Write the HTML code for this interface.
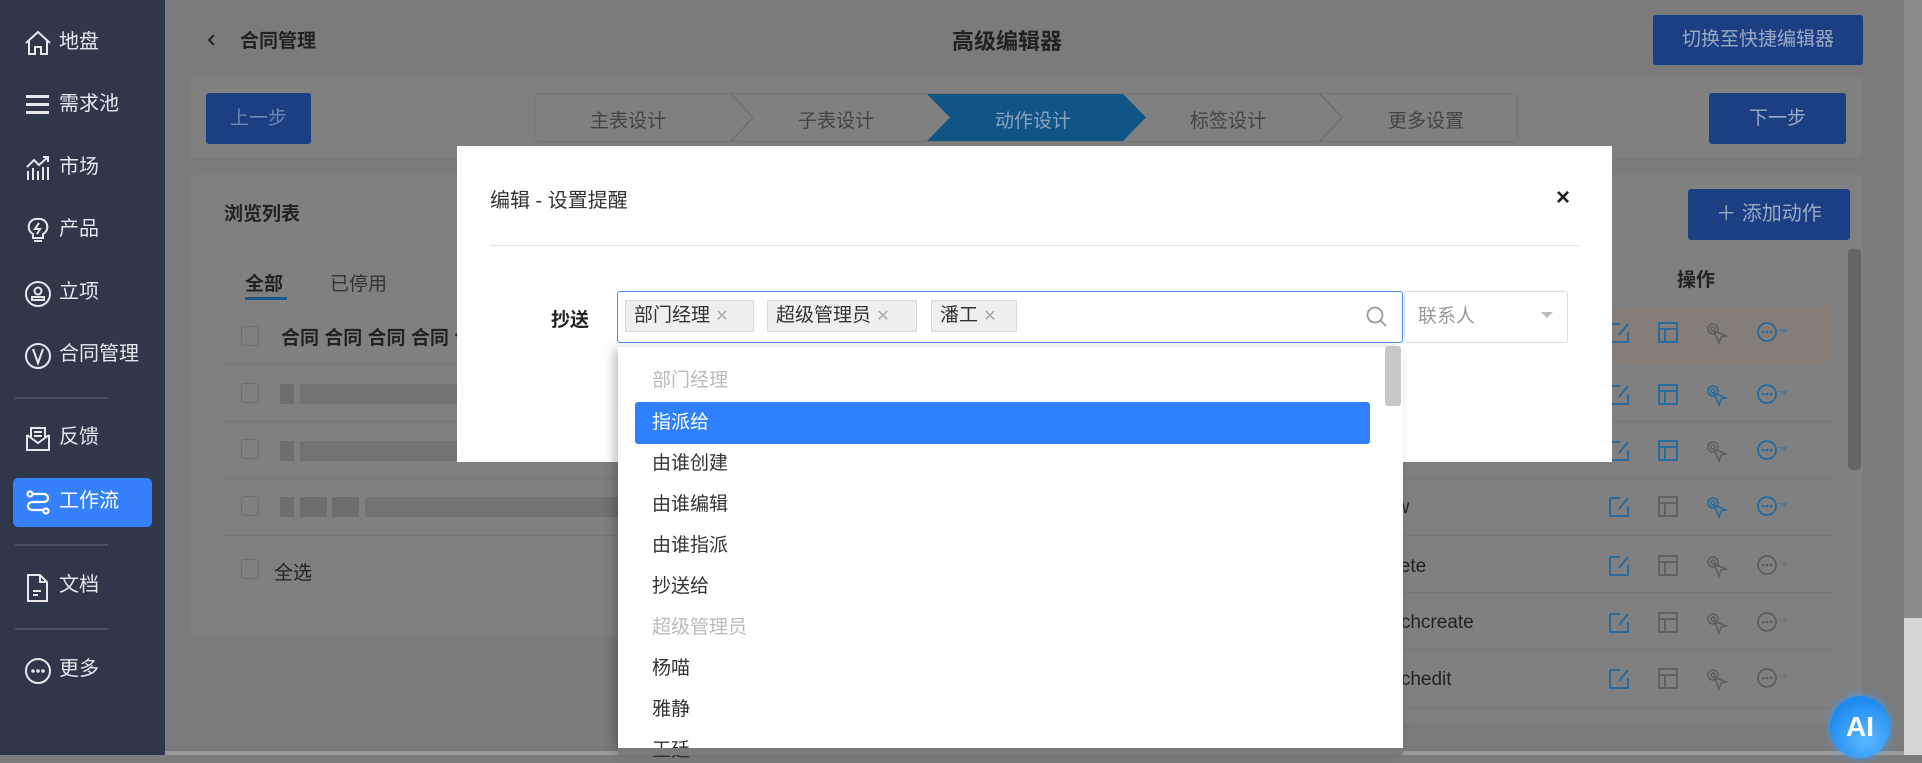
<!DOCTYPE html>
<html><head><meta charset="utf-8">
<style>
*{margin:0;padding:0;box-sizing:border-box}
body{width:1922px;height:755px;overflow:hidden;position:relative;background:#7b7b7b;font-family:"Liberation Sans","Noto Sans CJK SC",sans-serif;color:#222}
.a{position:absolute}
.sb{left:0;top:0;width:165px;height:755px;background:#2f3749}
.si{position:absolute;left:0;width:165px;height:40px;color:#e6e8ec;font-size:20px;line-height:40px;padding-left:59px}
.si svg{position:absolute;left:24px;top:8px}
.div{position:absolute;left:15px;width:93px;height:2px;background:#4a5263}
.card{background:#808080;border-radius:4px}
.btn{background:#1b3f82;color:#9aa9c6;font-size:19px;text-align:center;border-radius:3px}
.row{position:absolute;left:224px;width:1360px;height:1px;background:#777}
.cb{position:absolute;width:18px;height:20px;border:1px solid #707070;border-radius:3px}
.bar{position:absolute;height:20px;background:#6e6e6e}
.item{position:absolute;left:652px;font-size:19px;color:#333;line-height:24px}
</style></head><body>
<div class="a sb">
 <div class="si" style="top:22px"><svg width="28" height="26" viewBox="0 0 28 26" fill="none" stroke="#e6e8ec" stroke-width="2"><path d="M2 13 L14 2 L26 13 M5 11 V24 H11 V17 H17 V24 H23 V11"/></svg>地盘</div>
 <div class="si" style="top:84px"><svg width="28" height="26" viewBox="0 0 28 26" fill="#e6e8ec"><rect x="2" y="3" width="23" height="3"/><rect x="2" y="11" width="23" height="3"/><rect x="2" y="19" width="23" height="3"/></svg>需求池</div>
 <div class="si" style="top:147px"><svg width="28" height="26" viewBox="0 0 28 26" fill="none" stroke="#e6e8ec" stroke-width="2"><path d="M3 12 L10 5 L15 10 L24 2 M19 2 H24 V7 M4 16 V25 M9 13 V25 M14 16 V25 M19 12 V25 M24 12 V25"/></svg>市场</div>
 <div class="si" style="top:209px"><svg width="28" height="28" viewBox="0 0 28 28" fill="none" stroke="#e6e8ec" stroke-width="2"><path d="M14 2 A8 8 0 0 1 19 17 V21 H9 V17 A8 8 0 0 1 14 2 Z M10 24 H18 M15 6 L11 12 H16 L13 17"/></svg>产品</div>
 <div class="si" style="top:272px"><svg width="30" height="30" viewBox="0 0 30 30" fill="none" stroke="#e6e8ec" stroke-width="2"><circle cx="14" cy="14" r="12"/><circle cx="14" cy="11" r="3.5"/><path d="M8 20 H20 V17 H8 Z"/></svg>立项</div>
 <div class="si" style="top:334px"><svg width="30" height="30" viewBox="0 0 30 30" fill="none" stroke="#e6e8ec" stroke-width="2"><circle cx="14" cy="14" r="12"/><path d="M9 7 L14 21 L19 7"/></svg>合同管理</div>
 <div class="div" style="top:397px"></div>
 <div class="si" style="top:417px"><svg width="28" height="28" viewBox="0 0 28 28" fill="none" stroke="#e6e8ec" stroke-width="2"><path d="M3 10 V25 H25 V10 M3 10 L14 18 L25 10 M7 12 V3 H21 V12 M10 7 H18 M10 11 H18"/></svg>反馈</div>
 <div class="a" style="left:13px;top:478px;width:139px;height:49px;background:#3580fb;border-radius:5px"></div>
 <div class="si" style="top:481px;color:#fff"><svg width="28" height="28" viewBox="0 0 28 28" fill="none" stroke="#fff" stroke-width="2.2"><circle cx="6" cy="5" r="2.5"/><circle cx="22" cy="22" r="2.5"/><path d="M8 5 H20 A4 4 0 0 1 20 13 H8 A4 4 0 0 0 8 21 H19"/></svg>工作流</div>
 <div class="div" style="top:544px"></div>
 <div class="si" style="top:565px"><svg width="28" height="30" viewBox="0 0 28 30" fill="none" stroke="#e6e8ec" stroke-width="2"><path d="M4 2 H16 L23 9 V28 H4 Z M16 2 V9 H23 M9 18 H17 M9 22 H14"/></svg>文档</div>
 <div class="div" style="top:628px"></div>
 <div class="si" style="top:649px"><svg width="30" height="30" viewBox="0 0 30 30"><circle cx="14" cy="14" r="12" fill="none" stroke="#e6e8ec" stroke-width="2"/><circle cx="9" cy="14" r="1.8" fill="#e6e8ec"/><circle cx="14" cy="14" r="1.8" fill="#e6e8ec"/><circle cx="19" cy="14" r="1.8" fill="#e6e8ec"/></svg>更多</div>
</div>

<!-- header -->
<svg class="a" style="left:207px;top:33px" width="10" height="14"><path d="M7 2 L2 7 L7 12" fill="none" stroke="#222" stroke-width="2"/></svg>
<div class="a" style="left:240px;top:26px;font-size:19px;font-weight:bold;color:#222">合同管理</div>
<div class="a" style="left:952px;top:24px;font-size:22px;font-weight:bold;color:#222">高级编辑器</div>
<div class="a btn" style="left:1653px;top:15px;width:210px;height:50px;line-height:50px">切换至快捷编辑器</div>

<!-- step card -->
<div class="a card" style="left:190px;top:77px;width:1673px;height:81px"></div>
<div class="a btn" style="left:206px;top:93px;width:105px;height:51px;line-height:51px;color:#6f87b3">上一步</div>
<div class="a" style="left:534px;top:93px;width:984px;height:49px;border:1px solid #767676;border-radius:3px"></div>
<svg class="a" style="left:534px;top:93px" width="984" height="49"><polygon points="393,1 589,1 612,24.5 589,48 393,48 416,24.5" fill="#0f5585"/><polyline points="197,1 219,24.5 197,48" fill="none" stroke="#6a6a6a"/><polyline points="786,1 808,24.5 786,48" fill="none" stroke="#6a6a6a"/></svg>
<div class="a" style="left:590px;top:106px;font-size:19px;color:#444">主表设计</div>
<div class="a" style="left:798px;top:106px;font-size:19px;color:#444">子表设计</div>
<div class="a" style="left:995px;top:106px;font-size:19px;color:#8aa3bd">动作设计</div>
<div class="a" style="left:1190px;top:106px;font-size:19px;color:#444">标签设计</div>
<div class="a" style="left:1388px;top:106px;font-size:19px;color:#444">更多设置</div>
<div class="a btn" style="left:1709px;top:93px;width:137px;height:51px;line-height:51px">下一步</div>

<!-- list card -->
<div class="a card" style="left:190px;top:175px;width:1673px;height:461px"></div>
<div class="a" style="left:1403px;top:600px;width:460px;height:123px;background:#808080;border-radius:0 0 4px 4px"></div>
<div class="a" style="left:224px;top:199px;font-size:19px;font-weight:bold;color:#222">浏览列表</div>
<div class="a" style="left:245px;top:269px;font-size:19px;font-weight:bold;color:#222">全部</div>
<div class="a" style="left:245px;top:297px;width:42px;height:3px;background:#1b5a8a"></div>
<div class="a" style="left:330px;top:269px;font-size:19px;color:#333">已停用</div>
<div class="cb" style="left:241px;top:326px"></div>
<div class="a" style="left:281px;top:323px;font-size:19px;font-weight:bold;color:#222">合同 合同 合同 合同 合</div>
<div class="row" style="top:364px"></div>
<div class="cb" style="left:241px;top:383px"></div><div class="bar" style="left:280px;top:384px;width:14px"></div><div class="bar" style="left:300px;top:384px;width:330px;background:#727272"></div>
<div class="row" style="top:421px"></div>
<div class="cb" style="left:241px;top:439px"></div><div class="bar" style="left:280px;top:441px;width:14px"></div><div class="bar" style="left:300px;top:441px;width:330px;background:#727272"></div>
<div class="row" style="top:478px"></div>
<div class="cb" style="left:241px;top:496px"></div><div class="bar" style="left:280px;top:497px;width:14px"></div><div class="bar" style="left:300px;top:497px;width:27px"></div><div class="bar" style="left:332px;top:497px;width:27px"></div><div class="bar" style="left:365px;top:497px;width:260px;background:#727272"></div>
<div class="row" style="top:535px"></div>
<div class="cb" style="left:241px;top:559px"></div>
<div class="a" style="left:274px;top:558px;font-size:19px;color:#222">全选</div>

<div class="a btn" style="left:1688px;top:189px;width:162px;height:51px;line-height:51px;font-size:20px">＋ 添加动作</div>
<div class="a" style="left:1677px;top:265px;font-size:19px;font-weight:bold;color:#222">操作</div>
<div class="a" style="left:1848px;top:249px;width:13px;height:221px;background:#666;border-radius:4px"></div>
<div class="a" style="left:1400px;top:306px;width:432px;height:58px;background:#857d78"></div>
<div class="a" style="left:1385px;top:497px;font-size:19px;color:#222">ew</div>
<div class="a" style="left:1385px;top:556px;font-size:19px;color:#222">elete</div>
<div class="a" style="left:1385px;top:612px;font-size:19px;color:#222">atchcreate</div>
<div class="a" style="left:1385px;top:669px;font-size:19px;color:#222">atchedit</div>
<div class="row" style="left:1400px;width:432px;top:421px"></div>
<div class="row" style="left:1400px;width:432px;top:478px"></div>
<div class="row" style="left:1400px;width:432px;top:535px"></div>
<div class="row" style="left:1400px;width:432px;top:592px"></div>
<div class="row" style="left:1400px;width:432px;top:649px"></div>
<div class="row" style="left:1400px;width:432px;top:707px"></div>

<svg class="a" style="left:1600px;top:300px" width="240" height="400">
<defs>
<g id="ed"><path d="M2 2 H12 M2 2 V20 H20 V10 M20 2 L11 13" fill="none" stroke-width="1.8"/></g>
<g id="tb"><rect x="1" y="1" width="18" height="19" fill="none" stroke-width="1.8"/><path d="M1 7 H19 M7 7 V20" fill="none" stroke-width="1.8"/></g>
<g id="pt"><circle cx="7" cy="7" r="5" fill="none" stroke-width="1.5"/><circle cx="7" cy="7" r="2" fill="none" stroke-width="1.5"/><path d="M8 9 L20 14 L15 15 L13 21 Z" fill="none" stroke-width="1.5"/></g>
<g id="mo"><circle cx="10" cy="10" r="9" fill="none" stroke-width="1.8"/><circle cx="6" cy="10" r="1.3" stroke="none"/><circle cx="10" cy="10" r="1.3" stroke="none"/><circle cx="14" cy="10" r="1.3" stroke="none"/></g>
</defs>
<g stroke="#1f6aa0" fill="#1f6aa0">
<use href="#ed" x="8" y="22"/><use href="#tb" x="58" y="22"/><use href="#mo" x="157" y="22"/>
<use href="#ed" x="8" y="84"/><use href="#tb" x="58" y="84"/><use href="#pt" x="106" y="84"/><use href="#mo" x="157" y="84"/>
<use href="#ed" x="8" y="140"/><use href="#tb" x="58" y="140"/><use href="#mo" x="157" y="140"/>
<use href="#ed" x="8" y="196"/><use href="#pt" x="106" y="196"/><use href="#mo" x="157" y="196"/>
<use href="#ed" x="8" y="255"/><use href="#ed" x="8" y="312"/><use href="#ed" x="8" y="368"/>
</g>
<g stroke="#5e5e5e" fill="#5e5e5e">
<use href="#pt" x="106" y="22"/><use href="#pt" x="106" y="140"/>
<use href="#tb" x="58" y="196"/><use href="#tb" x="58" y="255"/><use href="#pt" x="106" y="255"/><use href="#mo" x="157" y="255"/>
<use href="#tb" x="58" y="312"/><use href="#pt" x="106" y="312"/><use href="#mo" x="157" y="312"/>
<use href="#tb" x="58" y="368"/><use href="#pt" x="106" y="368"/><use href="#mo" x="157" y="368"/>
</g>
<g fill="#4f7a98"><path d="M179 29 h9 l-4.5 5z"/><path d="M179 91 h9 l-4.5 5z"/><path d="M179 147 h9 l-4.5 5z"/><path d="M179 203 h9 l-4.5 5z"/></g>
<g fill="#777"><path d="M179 262 h9 l-4.5 5z"/><path d="M179 319 h9 l-4.5 5z"/><path d="M179 375 h9 l-4.5 5z"/></g>
</svg>

<!-- page scrollbar -->
<div class="a" style="left:1904px;top:0;width:18px;height:755px;background:#d6d6d6"></div>
<div class="a" style="left:1904px;top:0;width:18px;height:618px;background:#8a8a8a"></div>
<div class="a" style="left:165px;top:751px;width:1739px;height:4px;background:#9a9a9a"></div>

<!-- modal -->
<div class="a" style="left:457px;top:146px;width:1155px;height:316px;background:#fff"></div>
<div class="a" style="left:490px;top:184px;font-size:20px;color:#333">编辑 - 设置提醒</div>
<div class="a" style="left:1556px;top:184px;font-size:24px;font-weight:bold;color:#222">×</div>
<div class="a" style="left:490px;top:245px;width:1089px;height:1px;background:#e4e4e4"></div>
<div class="a" style="left:551px;top:305px;font-size:19px;font-weight:bold;color:#222">抄送</div>
<div class="a" style="left:617px;top:291px;width:786px;height:52px;border:1px solid #4a8be8;border-radius:3px"></div>
<div class="a" style="left:625px;top:300px;width:129px;height:32px;background:#eeeff1;border:1px solid #d8d9dc;border-radius:2px;font-size:19px;line-height:30px;padding-left:8px;color:#333">部门经理 <span style="color:#aaa;font-size:16px">✕</span></div>
<div class="a" style="left:767px;top:300px;width:150px;height:32px;background:#eeeff1;border:1px solid #d8d9dc;border-radius:2px;font-size:19px;line-height:30px;padding-left:8px;color:#333">超级管理员 <span style="color:#aaa;font-size:16px">✕</span></div>
<div class="a" style="left:931px;top:300px;width:86px;height:32px;background:#eeeff1;border:1px solid #d8d9dc;border-radius:2px;font-size:19px;line-height:30px;padding-left:8px;color:#333">潘工 <span style="color:#aaa;font-size:16px">✕</span></div>
<svg class="a" style="left:1365px;top:305px" width="24" height="24" fill="none" stroke="#999" stroke-width="1.8"><circle cx="10" cy="10" r="7.5"/><path d="M15.5 15.5 L21 21"/></svg>
<div class="a" style="left:1404px;top:291px;width:164px;height:52px;border:1px solid #dcdcdc;border-radius:3px;font-size:19px;line-height:50px;padding-left:13px;color:#999">联系人</div>
<svg class="a" style="left:1541px;top:312px" width="12" height="8"><path d="M0 0 H12 L6 6Z" fill="#bbb"/></svg>

<!-- dropdown -->
<div class="a" style="left:618px;top:347px;width:785px;height:402px;background:#fff;box-shadow:-4px 2px 10px rgba(0,0,0,.25)"></div>
<div class="a" style="left:1385px;top:346px;width:16px;height:60px;background:#c8c8c8;border-radius:3px"></div>
<div class="a" style="left:635px;top:402px;width:735px;height:42px;background:#2f80ff;border-radius:3px"></div>
<div class="item" style="top:369px;color:#bbb">部门经理</div>
<div class="item" style="top:411px;color:#fff">指派给</div>
<div class="item" style="top:452px">由谁创建</div>
<div class="item" style="top:493px">由谁编辑</div>
<div class="item" style="top:534px">由谁指派</div>
<div class="item" style="top:575px">抄送给</div>
<div class="item" style="top:616px;color:#bbb">超级管理员</div>
<div class="item" style="top:657px">杨喵</div>
<div class="item" style="top:698px">雅静</div>
<div class="item" style="top:739px">王廷</div>
<div class="a" style="left:618px;top:748px;width:785px;height:7px;background:#7b7b7b"></div>

<!-- AI -->
<div class="a" style="left:1830px;top:696px;width:60px;height:62px;border-radius:50%;background:radial-gradient(circle at 60% 70%,#5ab8ff,#1e8cf0 70%);box-shadow:0 0 8px #3aa0ff;color:#fff;font-weight:bold;font-size:28px;text-align:center;line-height:62px">AI</div>
</body></html>
